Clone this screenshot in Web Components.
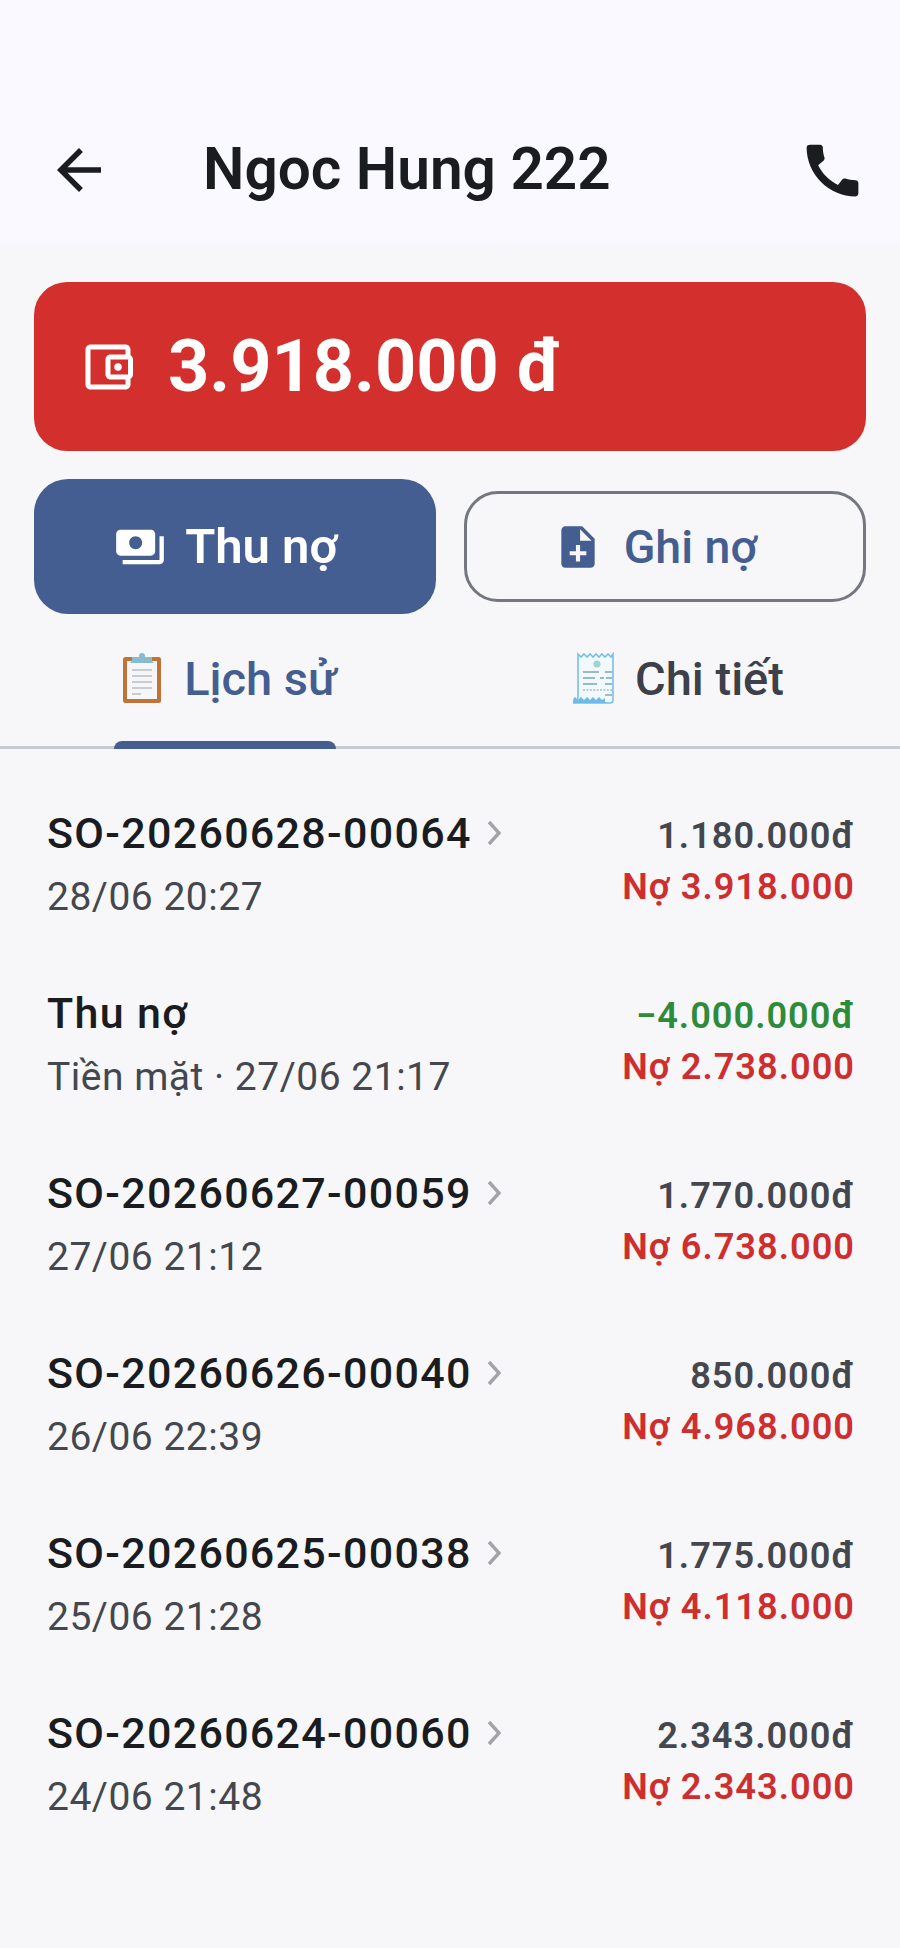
<!DOCTYPE html>
<html lang="vi">
<head>
<meta charset="utf-8">
<title>Ngoc Hung 222</title>
<style>
    html, body { margin: 0; padding: 0; }
    body {
        width: 900px;
        height: 1948px;
        overflow: hidden;
        background: #f7f7f9;
        font-family: Roboto, "Liberation Sans", sans-serif;
    }
</style>
</head>
<body>
<debt-header>Ngoc Hung 222</debt-header>
<balance-card>3.918.000 đ</balance-card>
<action-row></action-row>
<tab-bar></tab-bar>
<history-list>
    <history-row link title="SO-20260628-00064" sub="28/06 20:27" amount="1.180.000đ" debt="Nợ 3.918.000"></history-row>
    <history-row title="Thu nợ" sub="Tiền mặt · 27/06 21:17" amount="−4.000.000đ" debt="Nợ 2.738.000" paid></history-row>
    <history-row link title="SO-20260627-00059" sub="27/06 21:12" amount="1.770.000đ" debt="Nợ 6.738.000"></history-row>
    <history-row link title="SO-20260626-00040" sub="26/06 22:39" amount="850.000đ" debt="Nợ 4.968.000"></history-row>
    <history-row link title="SO-20260625-00038" sub="25/06 21:28" amount="1.775.000đ" debt="Nợ 4.118.000"></history-row>
    <history-row link title="SO-20260624-00060" sub="24/06 21:48" amount="2.343.000đ" debt="Nợ 2.343.000"></history-row>
</history-list>

<script>
class DebtHeader extends HTMLElement {
    constructor() {
        super();
        this.attachShadow({ mode: "open" });
        this.shadowRoot.innerHTML = `
            <style>
                :host {
                    display: flex;
                    align-items: center;
                    box-sizing: border-box;
                    height: 250px;
                    padding: 90px 33px 0 46px;
                    background: linear-gradient(#f9f9ff 0, #f9f9ff 238px, #f7f7f9 250px);
                    color: #1a1c20;
                }
                .back { width: 66px; height: 66px; flex: none; }
                .title {
                    flex: 1;
                    margin-left: 91px;
                    margin-top: -2px;
                    font-size: 58.5px;
                    font-weight: 600;
                }
                .call { width: 69px; height: 69px; flex: none; }
                svg { fill: currentColor; display: block; }
            </style>
            <svg class="back" viewBox="0 0 24 24"><path d="M20 11H7.83l5.59-5.59L12 4l-8 8 8 8 1.41-1.41L7.83 13H20v-2z"/></svg>
            <div class="title"><slot></slot></div>
            <svg class="call" viewBox="0 0 24 24"><path d="M20.01 15.38c-1.23 0-2.42-.2-3.53-.56-.35-.12-.74-.03-1.01.24l-1.57 1.97c-2.83-1.35-5.48-3.9-6.89-6.83l1.95-1.66c.27-.28.35-.67.24-1.02-.37-1.11-.56-2.3-.56-3.53 0-.54-.45-.99-.99-.99H4.19C3.65 3 3 3.24 3 3.99 3 13.28 10.73 21 20.01 21c.71 0 .99-.63.99-1.18v-3.45c0-.54-.45-.99-.99-.99z"/></svg>
        `;
    }
}

class BalanceCard extends HTMLElement {
    constructor() {
        super();
        this.attachShadow({ mode: "open" });
        this.shadowRoot.innerHTML = `
            <style>
                :host {
                    display: flex;
                    align-items: center;
                    gap: 30px;
                    box-sizing: border-box;
                    height: 169px;
                    margin: 32px 34px 0;
                    padding: 0 0 0 44px;
                    border-radius: 33px;
                    background: #d32f2c;
                    color: #fff;
                    font-size: 72px;
                    font-weight: 700;
                }
                svg { width: 60px; height: 60px; fill: #fff; flex: none; display: block; }
            </style>
            <svg viewBox="0 0 24 24"><path d="M21 7.28V5c0-1.1-.9-2-2-2H5c-1.11 0-2 .9-2 2v14c0 1.1.89 2 2 2h14c1.1 0 2-.9 2-2v-2.28c.59-.35 1-.98 1-1.72V9c0-.74-.41-1.38-1-1.72zM20 9v6h-7V9h7zM5 19V5h14v2h-6c-1.1 0-2 .9-2 2v6c0 1.1.9 2 2 2h6v2H5z"/><circle cx="16" cy="12" r="1.5"/></svg>
            <span><slot></slot></span>
        `;
    }
}

class ActionRow extends HTMLElement {
    constructor() {
        super();
        this.attachShadow({ mode: "open" });
        this.shadowRoot.innerHTML = `
            <style>
                :host {
                    display: grid;
                    grid-template-columns: 402px 402px;
                    justify-content: space-between;
                    align-items: center;
                    margin: 28px 34px 0;
                    font-weight: 600;
                }
                .btn {
                    display: flex;
                    align-items: center;
                    justify-content: center;
                    box-sizing: border-box;
                }
                .fill {
                    height: 135px;
                    gap: 19px;
                    padding-right: 18px;
                    border-radius: 34px;
                    background: #455e91;
                    color: #fff;
                    font-size: 49px;
                }
                .line {
                    height: 111px;
                    gap: 21px;
                    padding-right: 20px;
                    border: 3px solid #74777f;
                    border-radius: 34px;
                    color: #455e91;
                    font-size: 46.5px;
                    font-weight: 500;
                }
                svg { fill: currentColor; flex: none; display: block; }
            </style>
            <div class="btn fill">
                <svg width="52" height="52" viewBox="0 0 24 24"><path d="M19 14V6c0-1.1-.9-2-2-2H3c-1.1 0-2 .9-2 2v8c0 1.1.9 2 2 2h14c1.1 0 2-.9 2-2zm-9-1c-1.66 0-3-1.34-3-3s1.34-3 3-3 3 1.34 3 3-1.34 3-3 3zm13-6v11c0 1.1-.9 2-2 2H4v-2h17V7h2z"/></svg>
                <span>Thu nợ</span>
            </div>
            <div class="btn line">
                <svg width="50" height="50" viewBox="0 0 24 24"><path d="M14 2H6c-1.1 0-1.99.9-1.99 2L4 20c0 1.1.89 2 1.99 2H18c1.1 0 2-.9 2-2V8l-6-6zm2 14h-3v3h-2v-3H8v-2h3v-3h2v3h3v2zm-3-7V3.5L18.5 9H13z"/></svg>
                <span>Ghi nợ</span>
            </div>
        `;
    }
}

class TabBar extends HTMLElement {
    constructor() {
        super();
        this.attachShadow({ mode: "open" });
        this.shadowRoot.innerHTML = `
            <style>
                :host {
                    display: grid;
                    grid-template-columns: 450px 450px;
                    box-sizing: border-box;
                    height: 135px;
                    border-bottom: 3px solid #c8cad2;
                    font-size: 47px;
                    font-weight: 500;
                }
                .tab {
                    position: relative;
                    display: flex;
                    align-items: center;
                    justify-content: center;
                    gap: 16px;
                    padding: 0 0 4px 6px;
                    color: #3d4049;
                }
                .active { color: #455e91; gap: 20px; padding-left: 7px; }
                .active::after {
                    content: "";
                    position: absolute;
                    left: 114px;
                    width: 222px;
                    bottom: -3px;
                    height: 8px;
                    border-radius: 8px 8px 0 0;
                    background: #455e91;
                }
                svg { flex: none; display: block; }
            </style>
            <div class="tab active">
                <svg width="44" height="52" viewBox="0 0 44 52">
                    <rect x="3" y="5" width="38" height="46" rx="2.5" fill="#bf7339"/>
                    <rect x="7" y="9" width="30" height="38" fill="#f4f6f7"/>
                    <path d="M12 5h20v4l2 2H10l2-2z" fill="#86bccb"/>
                    <circle cx="22" cy="4" r="3" fill="#86bccb"/>
                    <path d="M12 18h20M12 24h20M12 30h20M12 36h20M12 42h9" stroke="#b8bfc4" stroke-width="1.6" fill="none"/>
                </svg>
                <span>Lịch sử</span>
            </div>
            <div class="tab">
                <svg width="47" height="52" viewBox="0 0 47 52">
                    <path d="M6 2l3 3 3-3 3 3 3-3 3 3 3-3 3 3 3-3 3 3 3-3 3 3 2-3v46c0 2-1 3-3 3H1c3-1 5-3 5-6z" fill="#f2f9fd" stroke="#74c0ea" stroke-width="1.6"/>
                    <path d="M1 51c0-4 1-6 2-6l3 3 3-3 3 3 3-3 3 3 3-3 3 3 3-3 3 3 3-2v4l3 1z" fill="#6dbbe8"/>
                    <circle cx="25" cy="12" r="3.6" fill="#9fd5d3"/>
                    <path d="M11 20h16M33 20h7M11 26h12M28 26h4M34 26h6M11 32h14M33 32h7" stroke="#7da3b4" stroke-width="1.6" fill="none"/>
                    <path d="M11 38h29" stroke="#a7bcc6" stroke-width="1.4" stroke-dasharray="2 1.4" fill="none"/>
                    <path d="M33 43h7" stroke="#7da3b4" stroke-width="1.4" fill="none"/>
                </svg>
                <span>Chi tiết</span>
            </div>
        `;
    }
}

class HistoryList extends HTMLElement {
    constructor() {
        super();
        this.attachShadow({ mode: "open" });
        this.shadowRoot.innerHTML = `
            <style>
                :host { display: block; padding: 24px 45px 0 47px; }
            </style>
            <slot></slot>
        `;
    }
}

class HistoryRow extends HTMLElement {
    connectedCallback() {
        if (this.shadowRoot) return;
        this.attachShadow({ mode: "open" });
        const chevron = this.hasAttribute("link")
            ? `<svg width="18" height="28" viewBox="0 0 18 28"><path d="M3 3l10 11L3 25" fill="none" stroke="#a2a4a8" stroke-width="3.4"/></svg>`
            : "";
        this.shadowRoot.innerHTML = `
            <style>
                :host {
                    display: flex;
                    justify-content: space-between;
                    box-sizing: border-box;
                    height: 180px;
                    padding-top: 31px;
                }
                .main { display: flex; align-items: center; gap: 14px; height: 58px; font-size: 43px; font-weight: 500; color: #1a1c20; letter-spacing: 1.3px; }
                .sub { margin-top: 6px; height: 58px; line-height: 58px; font-size: 39px; color: #44474e; letter-spacing: 0.5px; }
                .right { text-align: right; font-size: 36.2px; font-weight: 600; letter-spacing: 1px; padding-top: 6px; }
                .amount { height: 51px; line-height: 52px; color: ${this.hasAttribute("paid") ? "#2e8b3a" : "#44474e"}; }
                .debt { height: 52px; line-height: 52px; color: #cf2e2e; }
                svg { display: block; flex: none; }
            </style>
            <div>
                <div class="main"><span>${this.getAttribute("title")}</span>${chevron}</div>
                <div class="sub">${this.getAttribute("sub")}</div>
            </div>
            <div class="right">
                <div class="amount">${this.getAttribute("amount")}</div>
                <div class="debt">${this.getAttribute("debt")}</div>
            </div>
        `;
    }
}

customElements.define("debt-header", DebtHeader);
customElements.define("balance-card", BalanceCard);
customElements.define("action-row", ActionRow);
customElements.define("tab-bar", TabBar);
customElements.define("history-list", HistoryList);
customElements.define("history-row", HistoryRow);
</script>
</body>
</html>
